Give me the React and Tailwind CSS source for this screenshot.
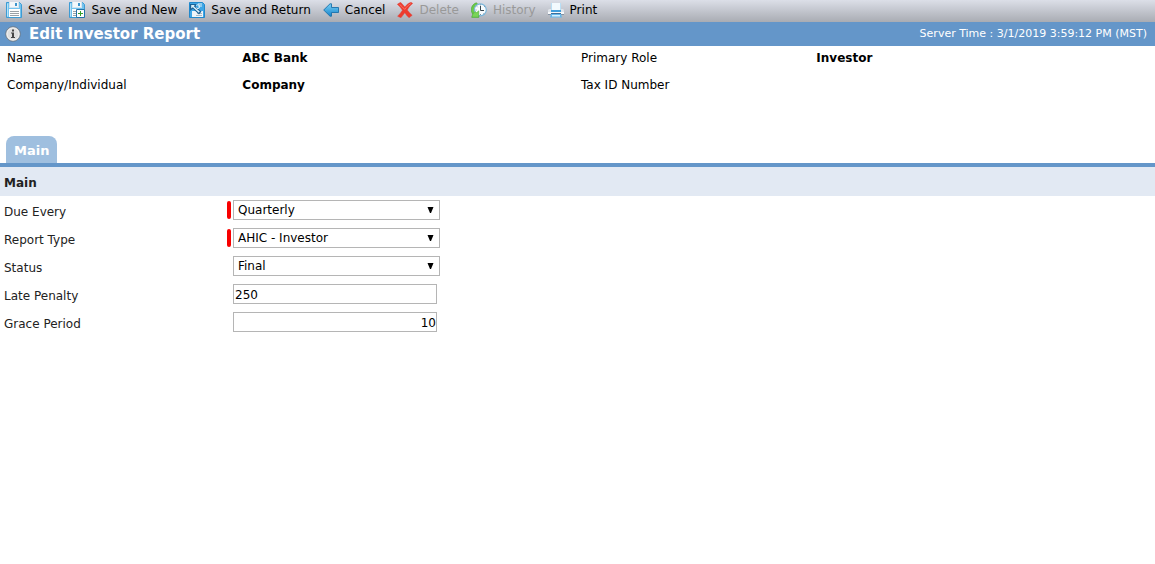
import React, { useState } from 'react';

function DiskBase() {
  return (
    <>
      <path d="M.5 .5h13l2 2v13H.5z" fill="#74c3ee" stroke="#3d9bd4" />
      <path d="M1.5 1.5v13" stroke="#b4e2f9" />
      <path d="M3 0h10v6H3z" fill="#d3e4ef" />
      <path d="M4 0h8v5H4z" fill="#f3f7fa" />
      <path d="M9 1h2v3H9z" fill="#3d94cc" />
      <path d="M3 7h11v8H3z" fill="#fff" />
      <path d="M4 9.5h9M4 11.5h9M4 13.5h9" stroke="#9ba1a6" />
    </>
  );
}

function SaveIcon() {
  return (
    <svg className="w-4 h-4" viewBox="0 0 16 16">
      <DiskBase />
    </svg>
  );
}

function SaveNewIcon() {
  return (
    <svg className="w-4 h-4" viewBox="0 0 16 16">
      <DiskBase />
      <path d="M7.5 7.5h8v8h-8z" fill="#fff" stroke="#2673a8" />
      <path d="M11.5 9v5M9 11.5h5" stroke="#36a02c" />
    </svg>
  );
}

function SaveReturnIcon() {
  return (
    <svg className="w-4 h-4" viewBox="0 0 16 16">
      <path d="M.5 .5h13l2 2v13H.5z" fill="#3ea6e6" stroke="#2288cb" />
      <path d="M9 1h4v4H9z" fill="#8ecbee" />
      <path d="M3 9h11v6H3z" fill="#eef5f9" />
      <path d="M8 11.5h5M7 13.5h6" stroke="#aab9c3" />
      <path d="M1 2h7L6.500 4.200l6 5.300-2.500 3-6-5.700L1 9z" fill="#1b6196" />
      <path d="M2.200 3h3.600L4.800 4.200l6 5.300-1 1.300-6-5.600L2.200 6.500z" fill="#d9f0fb" />
      <path d="M7 3.500c2-1.500 4-.5 3.500 1.500S8 7 7.500 5.500" fill="none" stroke="#e8f5fc" />
    </svg>
  );
}

function CancelIcon() {
  return (
    <svg className="w-4 h-4" viewBox="0 0 16 16">
      <defs>
        <linearGradient id="arrowFill" x1="0" y1="0" x2="0" y2="1">
          <stop offset="0" stopColor="#7ad0f5" />
          <stop offset="1" stopColor="#1584cc" />
        </linearGradient>
      </defs>
      <path d="M.7 8 7 1.800h1.500V5.500h7v5h-7v3.700H7z" fill="url(#arrowFill)" stroke="#1b70a9" strokeWidth=".9" strokeLinejoin="round" />
    </svg>
  );
}

function DeleteIcon() {
  return (
    <svg className="w-4 h-4" viewBox="0 0 16 16">
      <path
        d="M.3 2.300 3.500.3C5 1.500 6.500 3.400 7.800 5 9.500 2.800 11.500 1 14 .2l1.700 1.200C13.200 3.300 11.600 5.500 10.300 8c1.300 1.800 3 3.700 4.900 5.300L12 15.800c-1.600-1.400-3-3.200-4.200-5-1.300 1.700-2.500 3.500-3.900 5L.6 14.300C2.400 12.500 4 10.400 5.400 8.200 4 6 2.300 4 .3 2.300z"
        fill="#ee3b2e"
        stroke="#d9403a"
        strokeWidth=".4"
      />
      <path d="M2.500 2.300c2 1.500 3.700 3.600 5.200 5.100C9.300 5.200 11.300 3 13.800 1.600" fill="none" stroke="#f97b6b" strokeWidth=".9" />
    </svg>
  );
}

function HistoryIcon() {
  return (
    <svg className="w-4 h-4" viewBox="0 0 16 16">
      <path d="M5.500.8C1.500 2 0 5.500.4 8.800c.2 1.600.9 3 2 4.200L.8 15.200h7V8.800L5.600 10.600C3.600 8.500 3.300 5 6.500 2z" fill="#6cc94a" stroke="#43a634" strokeWidth=".6" />
      <circle cx="9.300" cy="7.800" r="6" fill="#f7fbfd" stroke="#79b5da" strokeWidth="1.200" />
      <path d="M9.500 4v4.500H13" fill="none" stroke="#39474f" />
      <path d="M9.500 2.500v1M9.500 12v1M4.500 8h1M13 5l.7-.6M6 4.500l.7.7M12.500 11.500l.6.6" stroke="#587486" strokeWidth=".8" />
      <path d="M.8 15.200h7V8.800L5.600 10.600 4 9.500 1.800 12z" fill="#79d557" stroke="#43a634" strokeWidth=".5" />
    </svg>
  );
}

function PrintIcon() {
  return (
    <svg className="w-4 h-4" viewBox="0 0 16 16">
      <path d="M3 1h10v8H3z" fill="#b9dff5" />
      <path d="M4 1h8v7H4z" fill="#f3fafe" />
      <path d="M0 8l1-1h2v2h10V7h2l1 1v5H0z" fill="#dfe4ea" />
      <path d="M3 8h10v2H3z" fill="#3d9ddb" />
      <path d="M0 10h16v2H0z" fill="#f6f8fa" />
      <path d="M0 12h16v1H0z" fill="#8492a3" />
      <path d="M3 11.500h10" stroke="#3b6f9b" />
      <path d="M2 15.500 3 12h10l1 3.500z" fill="#64b8ec" />
      <path d="M4 13h8v1.500H4z" fill="#d5effc" />
    </svg>
  );
}

function InfoIcon() {
  return (
    <svg className="w-4 h-4" viewBox="0 0 16 16">
      <circle cx="8" cy="8" r="7.300" fill="#dedede" stroke="#66717c" strokeWidth=".8" />
      <circle cx="8" cy="8" r="6" fill="none" stroke="#f5f5f5" strokeWidth=".8" />
      <path d="M7 3.500h2v2H7zM6 6.500h3V11h1v1H6v-1h1V7.500H6z" fill="#444" />
    </svg>
  );
}

const actions = [
  { label: 'Save', Icon: SaveIcon },
  { label: 'Save and New', Icon: SaveNewIcon },
  { label: 'Save and Return', Icon: SaveReturnIcon },
  { label: 'Cancel', Icon: CancelIcon },
  { label: 'Delete', Icon: DeleteIcon, disabled: true },
  { label: 'History', Icon: HistoryIcon, disabled: true },
  { label: 'Print', Icon: PrintIcon },
];

const details = [
  ['Name', 'ABC Bank'],
  ['Primary Role', 'Investor'],
  ['Company/Individual', 'Company'],
  ['Tax ID Number', ''],
];

function FieldRow({ id, label, required, children }) {
  return (
    <div className="flex h-7 items-center pl-1">
      <label htmlFor={id} className="w-[223px] shrink-0 pt-1 text-[#222]">{label}</label>
      <span className={required ? 'w-1 h-[18px] mr-0.5 rounded-xs bg-[#f80000]' : 'w-1 mr-0.5'} />
      {children}
    </div>
  );
}

function SelectField({ id, label, options, required }) {
  const [value, setValue] = useState(options[0]);

  return (
    <FieldRow id={id} label={label} required={required}>
      <div className="relative w-[207px]">
        <select
          id={id}
          value={value}
          required={required}
          onChange={(e) => setValue(e.target.value)}
          className="block w-full h-5 appearance-none border border-[#b5b5b5] bg-white pl-1 pr-5 text-black"
        >
          {options.map((option) => (
            <option key={option}>{option}</option>
          ))}
        </select>
        <svg className="absolute right-1.5 top-1.5 w-[7px] h-[7px] pointer-events-none" viewBox="0 0 7 7">
          <path d="M.5 1h6L4 7H3z" />
        </svg>
      </div>
    </FieldRow>
  );
}

function TextField({ id, label, initial, alignRight }) {
  const [value, setValue] = useState(initial);

  return (
    <FieldRow id={id} label={label}>
      <input
        id={id}
        type="text"
        value={value}
        onChange={(e) => setValue(e.target.value)}
        className={`w-[204px] h-5 border border-[#b5b5b5] bg-white pt-px text-black ${alignRight ? 'text-right' : 'pl-px'}`}
      />
    </FieldRow>
  );
}

export default function App() {
  return (
    <div className="min-h-screen bg-white text-xs text-black font-['DejaVu_Sans',Verdana,sans-serif]">
      {/* Toolbar */}
      <div className="flex h-[22px] items-center gap-3 bg-linear-to-b from-[#dcdfe8] to-[#a9acb3] pl-1.5 pb-0.5">
        {actions.map(({ label, Icon, disabled }) => (
          <button
            key={label}
            type="button"
            disabled={disabled}
            className="flex items-center gap-1.5 whitespace-nowrap disabled:text-[#999]"
          >
            <Icon />
            {label}
          </button>
        ))}
      </div>

      {/* Title bar */}
      <header className="flex h-6 items-center bg-[#6496c9] pl-[5px] pr-2 text-white">
        <InfoIcon />
        <h1 className="ml-2 pt-0.5 text-[15px] font-bold">Edit Investor Report</h1>
        <span className="ml-auto text-[11px]">Server Time : 3/1/2019 3:59:12 PM (MST)</span>
      </header>

      {/* Investor details */}
      <dl className="grid grid-cols-2 pl-[7px]">
        {details.map(([term, value]) => (
          <div key={term} className="grid h-[27px] grid-cols-[41fr_59fr] pt-1">
            <dt>{term}</dt>
            <dd className="font-bold">{value}</dd>
          </div>
        ))}
      </dl>

      {/* Tabs */}
      <nav className="mt-9 flex border-b-4 border-[#6496c9] pl-1.5">
        <a href="#main" className="flex h-[27px] items-center rounded-t-lg bg-[#9fbfdf] px-2 pt-0.5 text-[13px] font-bold text-white">
          Main
        </a>
      </nav>

      <form id="main" onSubmit={(e) => e.preventDefault()}>
        <h2 className="flex h-[29px] items-center bg-[#e2e9f3] pl-1 pt-0.5 font-bold text-[#222]">Main</h2>
        <SelectField id="due-every" label="Due Every" required options={['Quarterly', 'Monthly', 'Annually']} />
        <SelectField id="report-type" label="Report Type" required options={['AHIC - Investor']} />
        <SelectField id="status" label="Status" options={['Final', 'Draft']} />
        <TextField id="late-penalty" label="Late Penalty" initial="250" />
        <TextField id="grace-period" label="Grace Period" initial="10" alignRight />
      </form>
    </div>
  );
}
